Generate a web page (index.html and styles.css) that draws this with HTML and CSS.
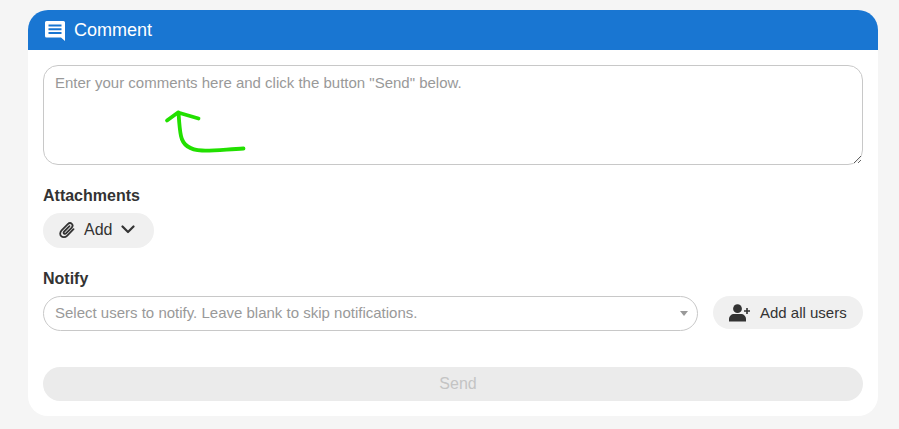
FILE: index.html
```html
<!DOCTYPE html>
<html lang="en">
<head>
  <meta charset="UTF-8" />
  <title>Comment</title>
  <link rel="stylesheet" href="styles.css">
</head>
<body>
  <div class="card">
    <div class="card-header">
      <svg class="header-icon" viewBox="0 0 20 20" width="20" height="20">
        <path fill="#fff" fill-rule="evenodd" d="M1.500 0h17A1.500 1.500 0 0 1 20 1.500V20l-4-3.500H1.500A1.500 1.500 0 0 1 0 15V1.500A1.500 1.500 0 0 1 1.500 0zM3.500 3.500v2h13v-2zm0 3.800v2h13v-2zm0 3.800v2h13v-2z"/>
      </svg>
      <span>Comment</span>
    </div>

    <div class="card-body">
      <div class="comment-box">
        <textarea class="comment-input" placeholder="Enter your comments here and click the button &quot;Send&quot; below."></textarea>
        <!-- hand drawn arrow on top of the textarea -->
        <svg class="scribble" viewBox="0 0 90 50" width="90" height="50">
          <path d="M3 12.500 L14 4.500 L34.500 10.500 M14.500 4.500 C15 12 15.500 21 17 28 C19 38 27 42 38 42.500 C50 43 65 41 79.500 40.500" fill="none" stroke="#22e000" stroke-width="3.800" stroke-linecap="round" stroke-linejoin="round"/>
        </svg>
      </div>

      <div class="field-label attachments-label">Attachments</div>
      <button class="pill add-btn">
        <svg viewBox="0 0 18 18" width="18" height="18">
          <path d="M15.500 8.200 9 14.800c-1.800 1.800-4.400 1.800-5.800.4s-1.400-4 .4-5.800l6.200-6.300c1.200-1.200 3-1.300 4-.3s.9 2.800-.3 4L8 12.300c-.6.600-1.500.7-2 .2s-.4-1.400.2-2l5.300-5.400" fill="none" stroke="#333" stroke-width="1.800" stroke-linecap="round"/>
        </svg>
        <span>Add</span>
        <svg viewBox="0 0 14 9" width="14" height="9">
          <path d="M1.500 1.500 7 7l5.500-5.500" fill="none" stroke="#333" stroke-width="2.200" stroke-linecap="round" stroke-linejoin="round"/>
        </svg>
      </button>

      <div class="field-label notify-label">Notify</div>
      <div class="notify-row">
        <div class="user-select">
          <span>Select users to notify. Leave blank to skip notifications.</span>
          <i class="caret"></i>
        </div>
        <button class="pill all-users-btn">
          <svg viewBox="0 0 22 18" width="22" height="18">
            <circle cx="8.500" cy="4.700" r="4.400" fill="#333"/>
            <path d="M0 17.500v-2.300C0 12 2.500 10 5 10h7c2.500 0 5 2 5 5.200v2.300z" fill="#333"/>
            <path d="M18 4v6M15 7h6" stroke="#333" stroke-width="1.600" fill="none"/>
          </svg>
          <span>Add all users</span>
        </button>
      </div>

      <button class="send-btn" disabled>Send</button>
    </div>
  </div>
</body>
</html>
```

FILE: styles.css
```css
body {
  font-family: "Liberation Sans", Arial, sans-serif;
  background-color: #f5f5f5;
  color: #333;
  margin: 0;
  padding: 10px 21px 13px 28px;
}

.card {
  background: white;
  border-radius: 20px;
  overflow: hidden;
  height: 406px;
}

.card-header {
  background: #1976d2;
  color: white;
  height: 40px;
  display: flex;
  align-items: center;
  gap: 9px;
  padding-left: 17px;
  font-size: 18px;
}

.header-icon {
  margin-top: 1px;
}

.card-body {
  padding: 15px 15px 0;
}

.comment-box {
  position: relative;
  height: 100px;
}

.comment-input {
  display: block;
  box-sizing: border-box;
  width: 100%;
  height: 100px;
  border: 1px solid #c8c8c8;
  border-radius: 15px;
  padding: 8px 11px;
  font-family: inherit;
  font-size: 15px;
  line-height: 17px;
  outline: none;
}

.comment-input::placeholder {
  color: #999;
}

.scribble {
  position: absolute;
  left: 121px;
  top: 43px;
  pointer-events: none;
}

.field-label {
  font-size: 16px;
  font-weight: bold;
  line-height: 18px;
}

.attachments-label {
  margin-top: 22px;
}

.notify-label {
  margin-top: 22px;
}

.pill {
  display: flex;
  align-items: center;
  border: none;
  border-radius: 18px;
  background: #f0f0f0;
  color: #333;
  font-family: inherit;
  cursor: pointer;
}

.add-btn {
  margin-top: 8px;
  width: 111px;
  height: 35px;
  padding: 0 0 2px 15px;
  font-size: 16px;
}

.add-btn span {
  margin: 0 9px 0 8px;
}

.notify-row {
  display: flex;
  gap: 15px;
  align-items: flex-start;
  margin-top: 8px;
}

.user-select {
  flex: 1;
  box-sizing: border-box;
  height: 35px;
  border: 1px solid #c8c8c8;
  border-radius: 18px;
  padding: 0 9px 2px 11px;
  display: flex;
  align-items: center;
  justify-content: space-between;
  font-size: 15px;
  color: #999;
}

.caret {
  width: 0;
  height: 0;
  margin-top: 2px;
  border-left: 4.500px solid transparent;
  border-right: 4.500px solid transparent;
  border-top: 5px solid #999;
}

.all-users-btn {
  width: 150px;
  height: 33px;
  padding: 0 0 0 16px;
  font-size: 15px;
  gap: 9px;
}

.send-btn {
  display: block;
  width: 100%;
  height: 34px;
  margin-top: 36px;
  padding: 0 0 0 10px;
  border: none;
  border-radius: 17px;
  background: #ebebeb;
  color: #c4c4c4;
  font-family: inherit;
  font-size: 16px;
}
```
